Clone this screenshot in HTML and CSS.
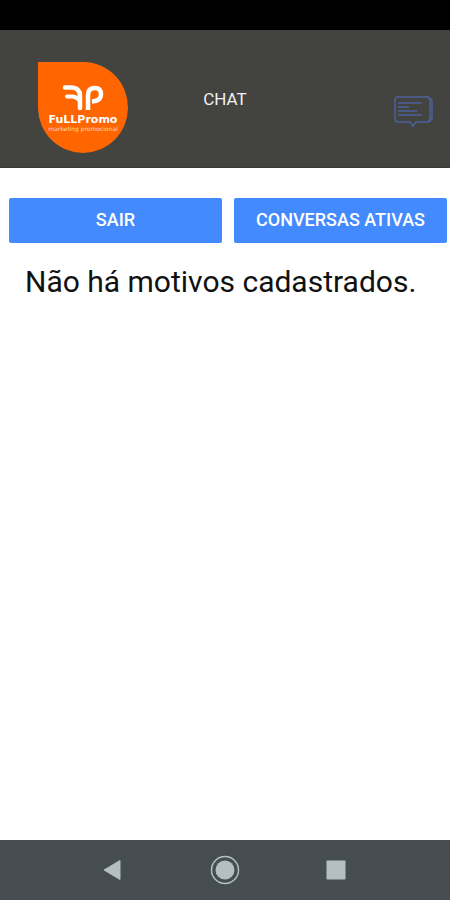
FILE: index.html
```html
<!DOCTYPE html>
<html lang="pt-BR">
<head>
    <meta charset="UTF-8">
    <meta name="viewport" content="width=device-width, initial-scale=1.0">
    <title>Chat</title>
    <link rel="stylesheet" href="styles.css">
</head>
<body>
<div class="status-bar"></div>

<header class="header">
    <svg class="logo" viewBox="0 0 91 91" role="img" aria-label="Fullpromo marketing promocional">
        <path fill="#ff6600" d="M0 0H46A45 45.500 0 1 1 0 46Z"/>
        <g fill="none" stroke="#fff" stroke-width="4.500">
            <path stroke-linecap="round" d="M27 25.500H34Q42 26 42 34V46"/>
            <path stroke-linecap="round" d="M29 34.500H34Q38 34.500 41 38" stroke-width="4"/>
            <path d="M50 48V33Q50 26 57 26Q63 26 63 32.500Q63 39 54 39.500"/>
        </g>
        <text class="logo-name" x="45" y="61">FuLLPromo</text>
        <text class="logo-tagline" x="45" y="69">marketing promocional</text>
    </svg>
    <h1 class="title">CHAT</h1>
    <button class="chat-button" type="button" aria-label="Mensagens">
        <svg class="chat-icon" viewBox="0 0 39 32" fill="none" stroke="#4c6299" stroke-width="1.400">
            <path d="M3 1H34L38 4V23L35 26H22L19 30L16 26H3L1 24V3Z"/>
            <path d="M34 1L36 4V23L34 26"/>
            <path d="M4 7H28M4 11H15M4 15H23M4 19H28"/>
        </svg>
    </button>
</header>

<main class="content">
    <div class="actions">
        <button class="action" type="button">SAIR</button>
        <button class="action" type="button">CONVERSAS ATIVAS</button>
    </div>
    <p class="message">Não há motivos cadastrados.</p>
</main>

<nav class="nav-bar">
    <button class="nav-button" type="button" aria-label="Voltar">
        <svg class="nav-icon" viewBox="0 0 30 30">
            <path fill="#b5bec2" stroke="#b5bec2" stroke-linejoin="round" d="M5 15L21 5.500V24.500Z"/>
        </svg>
    </button>
    <button class="nav-button" type="button" aria-label="Início">
        <svg class="nav-icon" viewBox="0 0 30 30">
            <circle cx="15" cy="15" r="13.500" fill="none" stroke="#b5bec2" stroke-width="1.500"/>
            <circle cx="15" cy="15" r="9.500" fill="#b5bec2"/>
        </svg>
    </button>
    <button class="nav-button" type="button" aria-label="Recentes">
        <svg class="nav-icon" viewBox="0 0 30 30">
            <rect x="5.500" y="5.500" width="19" height="19" rx="1" fill="#b5bec2"/>
        </svg>
    </button>
</nav>
</body>
</html>
```

FILE: styles.css
```css
* {
    box-sizing: border-box;
}

body {
    display: flex;
    flex-direction: column;
    min-height: 100vh;
    margin: 0;
    font-family: Roboto, "Liberation Sans", sans-serif;
    background-color: #fff;
    color: #111;
}

button {
    padding: 0;
    border: none;
    background: none;
    font-family: inherit;
    cursor: pointer;
}

.status-bar {
    height: 30px;
    background-color: #000;
}

/* Header */
.header {
    display: grid;
    grid-template-columns: 1fr auto 1fr;
    align-items: center;
    padding: 14px 0;
    background-color: #434340;
    border-bottom: 1px solid #383836;
}

.logo {
    width: 91px;
    height: 91px;
    margin: 18px 0 0 38px;
}

.logo-name,
.logo-tagline {
    fill: #fff;
    font-family: "DejaVu Sans", sans-serif;
    text-anchor: middle;
}

.logo-name {
    font-size: 11px;
    font-weight: bold;
}

.logo-tagline {
    font-size: 6px;
    fill: #ffd9bd;
}

.title {
    margin: 0;
    color: #f0f0f0;
    font-size: 17px;
    font-weight: 400;
    line-height: 20px;
}

.chat-button {
    justify-self: end;
    margin: 26px 17px 0 0;
}

.chat-icon {
    display: block;
    width: 39px;
    height: 32px;
}

/* Content */
.content {
    flex: 1;
    padding: 30px 3px 0 9px;
}

.actions {
    display: grid;
    grid-template-columns: 1fr 1fr;
    gap: 12px;
}

.action {
    height: 45px;
    padding-bottom: 2px;
    border-radius: 2px;
    background-color: #448aff;
    color: #fff;
    font-size: 18px;
    font-weight: 500;
}

.message {
    margin: 21px 16px;
    font-size: 30px;
    line-height: 36px;
}

/* Bottom navigation */
.nav-bar {
    display: flex;
    justify-content: center;
    gap: 81px;
    padding: 15px 0;
    background-color: #454d53;
}

.nav-icon {
    display: block;
    width: 30px;
    height: 30px;
}
```
